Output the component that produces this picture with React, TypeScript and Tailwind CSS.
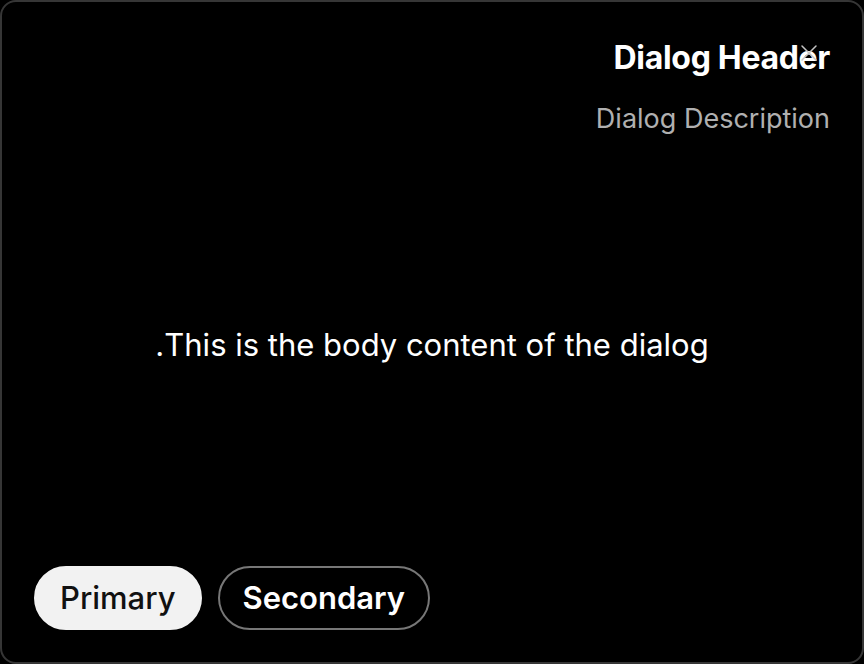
const App = () => {
  return (
    <div
      className="w-[864px] h-[664px] bg-black text-white"
      style={{ fontFamily: 'Inter, "Noto Sans", sans-serif' }}
    >
      <div
        dir="rtl"
        className="relative w-full h-full rounded-2xl border-2 border-[#363636] flex flex-col px-8 pt-9 pb-8"
      >
        <button className="absolute top-[42px] right-[44px] text-[#c4c4c4]" aria-label="close">
          <svg width="18" height="18" viewBox="0 0 18 18" fill="none" stroke="currentColor" strokeWidth="1.5" strokeLinecap="round">
            <path d="M2 2L16 16M16 2L2 16" />
          </svg>
        </button>

        <div className="flex flex-col gap-[23px] text-right">
          <h2 className="text-[32px] font-bold tracking-[-0.01em] leading-10">Dialog Header</h2>
          <p className="text-[27px] text-[#b0b0b0] leading-9">Dialog Description</p>
        </div>

        <div className="flex-1 flex items-center justify-center pb-3">
          <p className="text-[31px]">This is the body content of the dialog.</p>
        </div>

        <div dir="ltr" className="flex gap-4">
          <button className="h-16 px-[24px] rounded-full border-2 border-[#f2f2f2] bg-[#f2f2f2] text-[#111] text-[31px] font-medium">
            Primary
          </button>
          <button className="h-16 px-[23px] rounded-full border-2 border-[#777] text-white text-[31px] font-semibold">
            Secondary
          </button>
        </div>
      </div>
    </div>
  );
};

export default App;
